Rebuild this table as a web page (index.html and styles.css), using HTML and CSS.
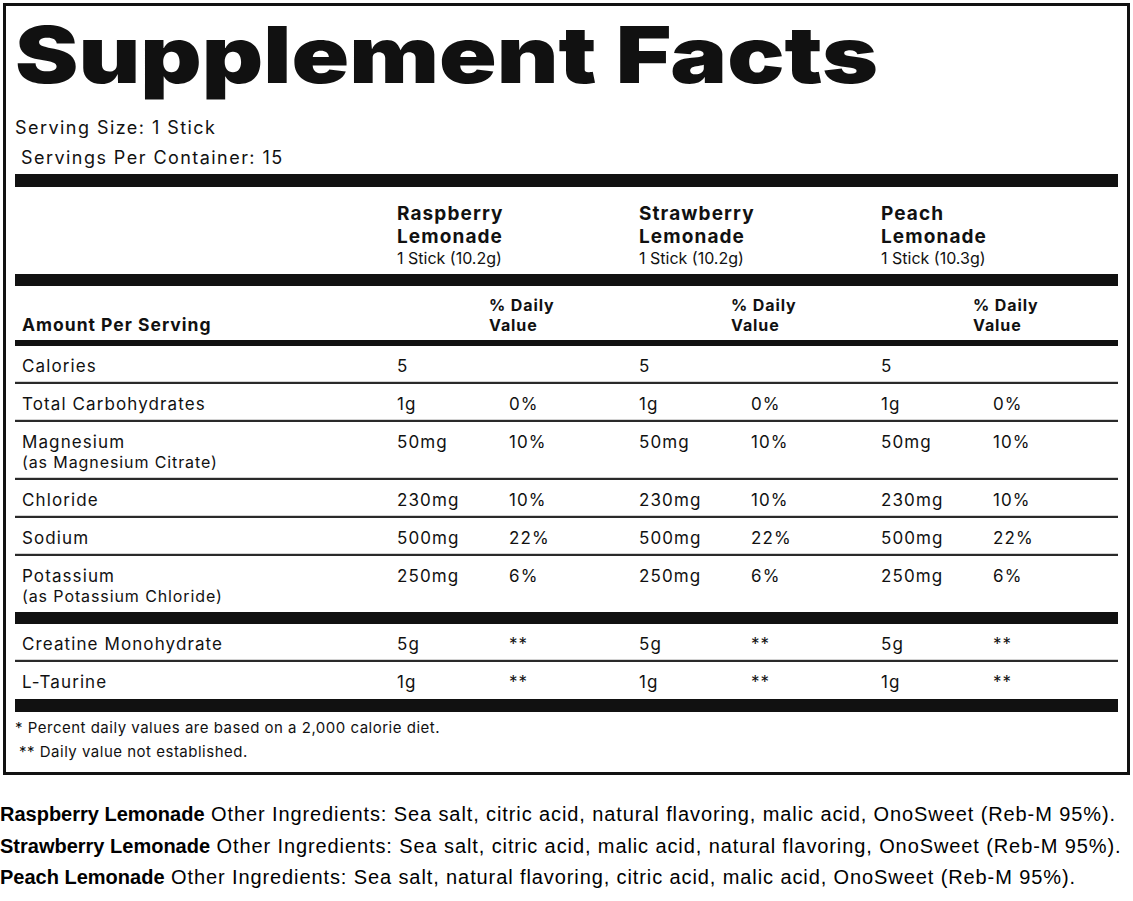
FILE: index.html
```html
<!DOCTYPE html>
<html lang="en">
<head>
<meta charset="utf-8">
<title>Supplement Facts</title>
<link rel="stylesheet" href="styles.css">
</head>
<body>
<div class="label">
  <h1 class="title"><span class="title-text">Supplement Facts</span></h1>
  <div class="serving">Serving Size: 1 Stick</div>
  <div class="serving indent">Servings Per Container: 15</div>
  <div class="bar bar-13"></div>
  <div class="products">
    <div></div>
    <div class="product"><b>Raspberry<br>Lemonade</b><span>1 Stick (10.2g)</span></div>
    <div class="product"><b>Strawberry<br>Lemonade</b><span>1 Stick (10.2g)</span></div>
    <div class="product"><b>Peach<br>Lemonade</b><span>1 Stick (10.3g)</span></div>
  </div>
  <div class="bar bar-12"></div>
  <div class="row head">
    <div class="cell amount-head">Amount Per Serving</div>
    <div class="cell"></div><div class="cell dvh">% Daily<br>Value</div>
    <div class="cell"></div><div class="cell dvh">% Daily<br>Value</div>
    <div class="cell"></div><div class="cell dvh">% Daily<br>Value</div>
  </div>
  <div class="bar bar-6"></div>
  <div class="row line">
    <div class="cell">Calories</div>
    <div class="cell">5</div><div class="cell"></div>
    <div class="cell">5</div><div class="cell"></div>
    <div class="cell">5</div><div class="cell"></div>
  </div>
  <div class="row line">
    <div class="cell">Total Carbohydrates</div>
    <div class="cell">1g</div><div class="cell">0%</div>
    <div class="cell">1g</div><div class="cell">0%</div>
    <div class="cell">1g</div><div class="cell">0%</div>
  </div>
  <div class="row line">
    <div class="cell">Magnesium<span class="sub">(as Magnesium Citrate)</span></div>
    <div class="cell">50mg</div><div class="cell">10%</div>
    <div class="cell">50mg</div><div class="cell">10%</div>
    <div class="cell">50mg</div><div class="cell">10%</div>
  </div>
  <div class="row line">
    <div class="cell">Chloride</div>
    <div class="cell">230mg</div><div class="cell">10%</div>
    <div class="cell">230mg</div><div class="cell">10%</div>
    <div class="cell">230mg</div><div class="cell">10%</div>
  </div>
  <div class="row line">
    <div class="cell">Sodium</div>
    <div class="cell">500mg</div><div class="cell">22%</div>
    <div class="cell">500mg</div><div class="cell">22%</div>
    <div class="cell">500mg</div><div class="cell">22%</div>
  </div>
  <div class="row">
    <div class="cell">Potassium<span class="sub">(as Potassium Chloride)</span></div>
    <div class="cell">250mg</div><div class="cell">6%</div>
    <div class="cell">250mg</div><div class="cell">6%</div>
    <div class="cell">250mg</div><div class="cell">6%</div>
  </div>
  <div class="bar bar-12"></div>
  <div class="row line">
    <div class="cell">Creatine Monohydrate</div>
    <div class="cell">5g</div><div class="cell">**</div>
    <div class="cell">5g</div><div class="cell">**</div>
    <div class="cell">5g</div><div class="cell">**</div>
  </div>
  <div class="row">
    <div class="cell">L-Taurine</div>
    <div class="cell">1g</div><div class="cell">**</div>
    <div class="cell">1g</div><div class="cell">**</div>
    <div class="cell">1g</div><div class="cell">**</div>
  </div>
  <div class="bar bar-13"></div>
  <div class="notes">
    <div>* Percent daily values are based on a 2,000 calorie diet.</div>
    <div class="indent-note">** Daily value not established.</div>
  </div>
</div>
<div class="ingredients">
  <p><b>Raspberry Lemonade</b> Other Ingredients: Sea salt, citric acid, natural flavoring, malic acid, OnoSweet (Reb-M 95%).</p>
  <p><b>Strawberry Lemonade</b> Other Ingredients: Sea salt, citric acid, malic acid, natural flavoring, OnoSweet (Reb-M 95%).</p>
  <p><b>Peach Lemonade</b> Other Ingredients: Sea salt, natural flavoring, citric acid, malic acid, OnoSweet (Reb-M 95%).</p>
</div>
</body>
</html>
```
FILE: styles.css
```css
html, body {
  margin: 0;
  padding: 0;
  background: #fff;
  color: #111;
}
body {
  width: 1133px;
  font-family: Inter, "Noto Sans", sans-serif;
}
.label {
  margin: 3px 3px 0 3px;
  border: 3px solid #111;
  padding: 10px 9px 8px 9px;
}
.title {
  margin: 0 0 19px 0;
  font-family: Inter, sans-serif;
  font-weight: 900;
  font-size: 78px;
  line-height: 78px;
  letter-spacing: 0;
  white-space: nowrap;
}
.title-text {
  display: inline-block;
  transform: scaleX(1.221);
  transform-origin: 0 50%;
}
.serving {
  font-size: 18px;
  line-height: 30px;
  letter-spacing: 1.45px;
}
.serving.indent {
  padding-left: 6px;
}
.bar {
  background: #111;
}
.bar-13 { height: 13px; margin-top: 1px; }
.bar-12 { height: 12px; }
.bar-6 { height: 6px; }
.products {
  display: grid;
  grid-template-columns: 375px repeat(3, 242px);
  padding: 15px 0 6px 0;
}
.product {
  padding-left: 7px;
  display: flex;
  flex-direction: column;
}
.product b {
  font-size: 19px;
  line-height: 23px;
  font-weight: 700;
  letter-spacing: 1.1px;
}
.product span {
  font-size: 16px;
  line-height: 20px;
  letter-spacing: 0;
}
.row {
  display: grid;
  grid-template-columns: 375px repeat(3, 112px 130px);
  padding: 10px 0 6px 0;
  font-size: 17px;
  line-height: 20px;
  letter-spacing: 1.1px;
}
.row.line {
  border-bottom: 2px solid #2a2a2a;
  box-shadow: inset 0 -1px 0 #d2d2d2;
}
.cell {
  padding-left: 7px;
}
.sub {
  display: block;
  font-size: 16px;
  line-height: 20px;
  letter-spacing: 0.9px;
}
.row.head {
  padding: 10px 0 5px 0;
  font-weight: 700;
  font-size: 16px;
  line-height: 19.5px;
  letter-spacing: 0.9px;
}
.amount-head {
  align-self: end;
  font-size: 17.5px;
  line-height: 20px;
  letter-spacing: 1px;
}
.dvh {
  margin-left: -20px;
}
.notes {
  padding-top: 4px;
  font-size: 15px;
  line-height: 24px;
  letter-spacing: 0.5px;
}
.indent-note {
  padding-left: 4px;
}
.ingredients {
  margin-top: 24px;
  font-family: "Liberation Sans", Arial, sans-serif;
  font-size: 20px;
  line-height: 31.5px;
  color: #000;
  letter-spacing: 0.9px;
}
.ingredients b {
  letter-spacing: 0;
}
.ingredients p {
  margin: 0;
  white-space: nowrap;
}
```
